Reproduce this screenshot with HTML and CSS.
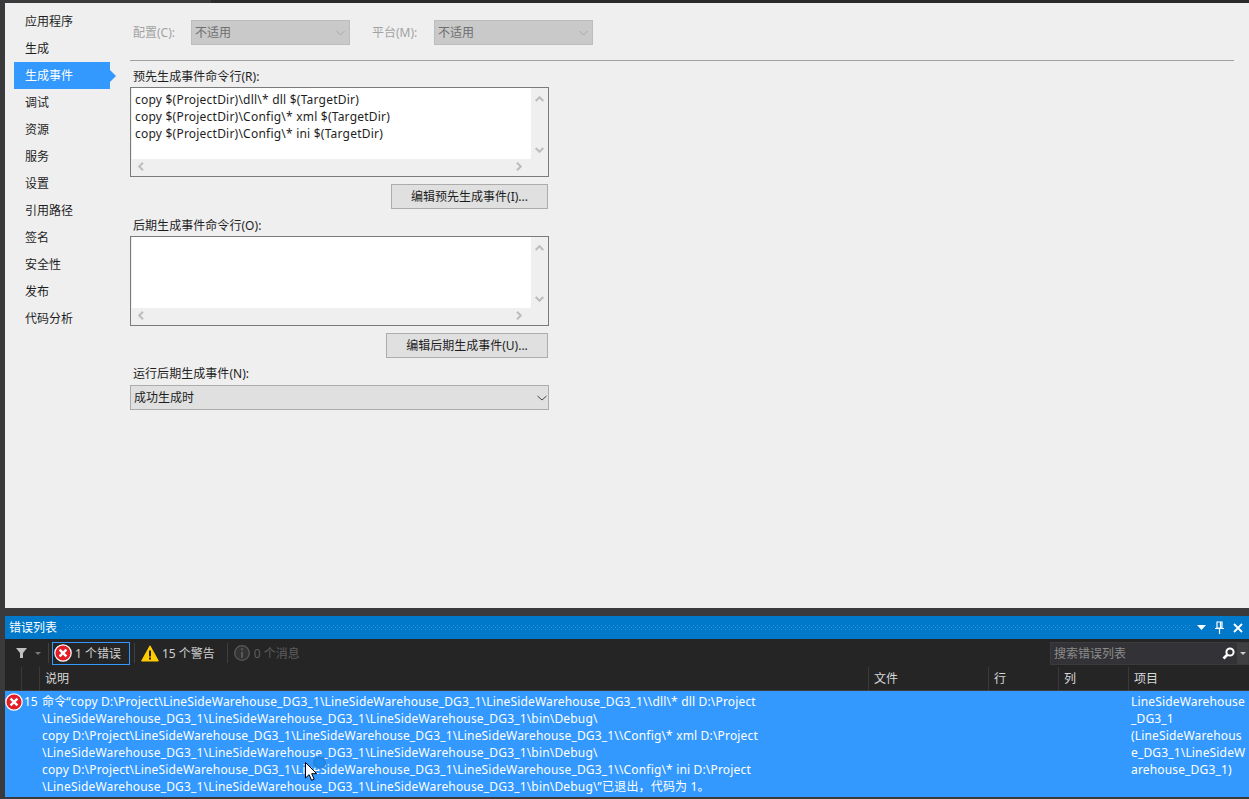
FILE: index.html
```html
<!DOCTYPE html>
<html lang="zh-CN">
<head>
<meta charset="utf-8">
<title>项目属性</title>
<link rel="stylesheet" href="styles.css">
</head>
<body>
<div class="topbar"><div class="topbar-dark"></div></div>
<main class="props">
  <nav class="side">
    <div class="nav">应用程序</div>
    <div class="nav">生成</div>
    <div class="nav active">生成事件</div>
    <div class="nav">调试</div>
    <div class="nav">资源</div>
    <div class="nav">服务</div>
    <div class="nav">设置</div>
    <div class="nav">引用路径</div>
    <div class="nav">签名</div>
    <div class="nav">安全性</div>
    <div class="nav">发布</div>
    <div class="nav">代码分析</div>
  </nav>
  <section class="form">
    <div class="config">
      <span class="dim lbl-c">配置(C):</span>
      <div class="select disabled s1">不适用<svg class="chev" width="9" height="6" viewBox="0 0 9 6"><path d="M.5 1l4 4 4-4" fill="none" stroke="#a8a8a8"/></svg></div>
      <span class="dim lbl-m">平台(M):</span>
      <div class="select disabled s1">不适用<svg class="chev" width="9" height="6" viewBox="0 0 9 6"><path d="M.5 1l4 4 4-4" fill="none" stroke="#a8a8a8"/></svg></div>
    </div>
    <div class="rule"></div>
    <label class="cap first">预先生成事件命令行(R):</label>
    <div class="area">
      <div class="area-text">copy $(ProjectDir)\dll\* dll $(TargetDir)<br>copy $(ProjectDir)\Config\* xml $(TargetDir)<br>copy $(ProjectDir)\Config\* ini $(TargetDir)</div>
      <div class="vbar"><svg width="9" height="6" viewBox="0 0 9 6"><path d="M.7 5L4.5 1.2 8.3 5" fill="none" stroke="#bdbdbd" stroke-width="2"/></svg><svg width="9" height="6" viewBox="0 0 9 6"><path d="M.7 1l3.8 3.8L8.3 1" fill="none" stroke="#bdbdbd" stroke-width="2"/></svg></div>
      <div class="hbar"><svg width="6" height="9" viewBox="0 0 6 9"><path d="M5 .7L1.2 4.5 5 8.3" fill="none" stroke="#bdbdbd" stroke-width="2"/></svg><svg width="6" height="9" viewBox="0 0 6 9"><path d="M1 .7l3.8 3.8L1 8.3" fill="none" stroke="#bdbdbd" stroke-width="2"/></svg></div>
    </div>
    <div class="btn-row"><div class="btn b1">编辑预先生成事件(I)...</div></div>
    <label class="cap second">后期生成事件命令行(O):</label>
    <div class="area">
      <div class="area-text"></div>
      <div class="vbar"><svg width="9" height="6" viewBox="0 0 9 6"><path d="M.7 5L4.5 1.2 8.3 5" fill="none" stroke="#bdbdbd" stroke-width="2"/></svg><svg width="9" height="6" viewBox="0 0 9 6"><path d="M.7 1l3.8 3.8L8.3 1" fill="none" stroke="#bdbdbd" stroke-width="2"/></svg></div>
      <div class="hbar"><svg width="6" height="9" viewBox="0 0 6 9"><path d="M5 .7L1.2 4.5 5 8.3" fill="none" stroke="#bdbdbd" stroke-width="2"/></svg><svg width="6" height="9" viewBox="0 0 6 9"><path d="M1 .7l3.8 3.8L1 8.3" fill="none" stroke="#bdbdbd" stroke-width="2"/></svg></div>
    </div>
    <div class="btn-row"><div class="btn b2">编辑后期生成事件(U)...</div></div>
    <label class="cap third">运行后期生成事件(N):</label>
    <div class="select run">成功生成时<svg class="chev" width="10" height="6" viewBox="0 0 10 6"><path d="M.5 1l4.5 4 4.5-4" fill="none" stroke="#444"/></svg></div>
  </section>
</main>
<section class="panel">
  <header class="title">
    <span class="title-text">错误列表</span>
    <span class="dots"></span>
    <svg class="t-ico drop" width="9" height="5" viewBox="0 0 9 5"><path d="M0 0h9L4.5 5z" fill="#fff"/></svg>
    <svg class="t-ico pin" width="9" height="13" viewBox="0 0 9 13"><path d="M2 1h5v6H2zM5.5 1v6M0 7.5h9M4.5 8v5" fill="none" stroke="#fff" stroke-width="1.2"/></svg>
    <svg class="t-ico x" width="10" height="10" viewBox="0 0 10 10"><path d="M1 1l8 8M9 1l-8 8" stroke="#fff" stroke-width="1.8"/></svg>
  </header>
  <div class="tools">
    <svg class="filter" width="11" height="10" viewBox="0 0 11 10"><path d="M0 0h11L7 5v5H4V5z" fill="#c0c0c0"/></svg>
    <svg class="caret" width="6" height="3" viewBox="0 0 6 3"><path d="M0 0h6L3 3z" fill="#777"/></svg>
    <span class="sep s1"></span>
    <div class="tbtn on">
      <svg width="18" height="18" viewBox="0 0 18 18"><circle cx="9" cy="9" r="8.2" fill="#e41e26" stroke="#fff" stroke-width="1.2"/><path d="M5.6 5.6l6.8 6.8M12.4 5.6l-6.8 6.8" stroke="#fff" stroke-width="2.4"/></svg>
      <span>1 个错误</span>
    </div>
    <span class="sep s2"></span>
    <div class="tbtn warn">
      <svg width="18" height="17" viewBox="0 0 18 17"><path d="M9 .8L17.4 16H.6z" fill="#ffcc00" stroke="#ffcc00" stroke-linejoin="round"/><path d="M9 5.5v6M9 12.5v2" stroke="#222" stroke-width="2"/></svg>
      <span>15 个警告</span>
    </div>
    <span class="sep s3"></span>
    <div class="tbtn off">
      <svg width="16" height="16" viewBox="0 0 16 16"><circle cx="8" cy="8" r="7.3" fill="#333" stroke="#5a5a5a" stroke-width="1.3"/><path d="M8 3.3v2M8 6.8v6" stroke="#5a5a5a" stroke-width="2"/></svg>
      <span>0 个消息</span>
    </div>
    <div class="search">
      <span class="search-text">搜索错误列表</span>
      <svg class="mag" width="13" height="13" viewBox="0 0 13 13"><circle cx="8" cy="5" r="3.6" fill="none" stroke="#fff" stroke-width="2"/><path d="M5.5 7.5L1.5 11.5" stroke="#fff" stroke-width="2.6"/></svg>
      <span class="search-btn"><svg width="6" height="3" viewBox="0 0 6 3"><path d="M0 0h6L3 3z" fill="#ccc"/></svg></span>
    </div>
  </div>
  <div class="grid head">
    <div class="cell"></div><div class="cell"></div>
    <div class="cell">说明</div><div class="cell">文件</div><div class="cell">行</div><div class="cell">列</div><div class="cell">项目</div>
  </div>
  <div class="grid row">
    <div class="r-icon"><svg width="18" height="18" viewBox="0 0 18 18"><circle cx="9" cy="9" r="8.2" fill="#e41e26" stroke="#fff" stroke-width="1.2"/><path d="M5.6 5.6l6.8 6.8M12.4 5.6l-6.8 6.8" stroke="#fff" stroke-width="2.4"/></svg></div>
    <div class="r-num">15</div>
    <div class="r-desc">命令“copy D:\Project\LineSideWarehouse_DG3_1\LineSideWarehouse_DG3_1\LineSideWarehouse_DG3_1\\dll\* dll D:\Project<br>\LineSideWarehouse_DG3_1\LineSideWarehouse_DG3_1\LineSideWarehouse_DG3_1\bin\Debug\<br>copy D:\Project\LineSideWarehouse_DG3_1\LineSideWarehouse_DG3_1\LineSideWarehouse_DG3_1\\Config\* xml D:\Project<br>\LineSideWarehouse_DG3_1\LineSideWarehouse_DG3_1\LineSideWarehouse_DG3_1\bin\Debug\<br>copy D:\Project\LineSideWarehouse_DG3_1\LineSideWarehouse_DG3_1\LineSideWarehouse_DG3_1\\Config\* ini D:\Project<br>\LineSideWarehouse_DG3_1\LineSideWarehouse_DG3_1\LineSideWarehouse_DG3_1\bin\Debug\”已退出，代码为 1。</div>
    <div></div><div></div><div></div>
    <div class="r-proj">LineSideWarehouse<br>_DG3_1<br>(LineSideWarehous<br>e_DG3_1\LineSideW<br>arehouse_DG3_1)</div>
  </div>
</section>
<div class="ring"></div>
<svg class="cursor" width="13" height="19" viewBox="0 0 13 19"><path d="M.5.5v15.5l3.6-3.3 2.5 5.6 2.6-1.1-2.5-5.5h5z" fill="#fff" stroke="#000" stroke-width="1"/></svg>
</body>
</html>
```
FILE: styles.css
```css
* { box-sizing: border-box; }
html, body { margin: 0; height: 100%; }
body {
  width: 1249px; height: 799px; overflow: hidden; position: relative;
  background: #3a3a3d;
  font: 12px/17px "Noto Sans", "Noto Sans CJK SC", sans-serif;
  color: #1e1e1e;
  display: flex; flex-direction: column;
}
.topbar { height: 3px; background: #3a3a3d; display: flex; justify-content: flex-end; flex: none; }
.topbar-dark { width: 1038px; background: #2a2a2c; }
.props {
  height: 605px; margin-left: 5px; flex: none;
  background: #efefef; display: flex;
}
.side { width: 125px; padding: 5px 0 0 9px; flex: none; }
.nav { width: 96px; height: 27px; line-height: 27px; padding-left: 11px; color: #1e1e1e; position: relative; }
.nav.active { background: #3399ff; color: #fff; }
.nav.active::after {
  content: ""; position: absolute; left: 96px; top: 8px;
  border-left: 6px solid #3399ff; border-top: 6px solid transparent; border-bottom: 6px solid transparent;
}
.form { width: 1104px; flex: none; display: flex; flex-direction: column; }
.config { display: flex; align-items: center; height: 25px; margin-top: 17px; }
.dim { color: #a2a2a2; }
.lbl-c { margin-left: 3px; width: 58px; }
.lbl-m { margin-left: 22px; width: 62px; }
.select {
  height: 25px; line-height: 23px; border: 1px solid #acacac; background: #e0e0e0;
  padding-left: 3px; position: relative; color: #1e1e1e;
}
.select .chev { position: absolute; right: 4px; top: 9px; }
.select.disabled { background: #c9c9c9; border-color: #bdbdbd; color: #6e6e6e; }
.s1 { width: 159px; }
.rule { height: 1px; background: #a0a0a0; margin-top: 15px; }
.cap { display: block; height: 17px; line-height: 17px; padding-left: 3px; color: #1e1e1e; letter-spacing: 0.05px; }
.cap.first { margin-top: 7px; }
.cap.second { margin-top: 8px; }
.cap.third { margin-top: 7px; }
.area {
  width: 419px; height: 90px; margin-top: 2px; border: 1px solid #7a7a7a; background: #efefef;
  display: grid; grid-template-columns: 400px 1fr; grid-template-rows: 71px 1fr; flex: none;
}
.area-text { background: #fff; padding: 3px 0 0 3px; border-radius: 0 0 2px 0; white-space: nowrap; margin: 0 0 0 1px; overflow: hidden; letter-spacing: 0.22px; }
.vbar { grid-row: 1 / 3; grid-column: 2; display: flex; flex-direction: column; align-items: center; gap: 45px; padding-top: 8px; }
.hbar { grid-row: 2; grid-column: 1; display: flex; justify-content: space-between; align-items: center; padding: 0 9px 2px 7px; }
.btn-row { display: flex; justify-content: flex-end; width: 418px; margin-top: 7px; }
.btn {
  height: 25px; line-height: 23px; background: #e0e0e0; border: 1px solid #acacac; text-align: center; color: #1e1e1e;
}
.b1 { width: 157px; }
.b2 { width: 162px; }
.run { width: 419px; margin-top: 3px; }
.run .chev { right: 1px; top: 9px; }

.panel { flex: 1; margin: 8px 0 2px 5px; background: #252526; display: flex; flex-direction: column; min-height: 0; }
.title { height: 23px; background: #0079cb; color: #fff; display: flex; align-items: center; padding-left: 4px; flex: none; }
.title-text { width: 56px; flex: none; }
.dots {
  width: 1125px; height: 6px; flex: none;
  background-image:
    radial-gradient(circle at 0.5px 0.5px, #2f95da 0.7px, transparent 0.8px),
    radial-gradient(circle at 2.5px 2.5px, #2f95da 0.7px, transparent 0.8px);
  background-size: 4px 4px;
}
.t-ico { flex: none; }
.drop { margin-left: 7px; }
.pin { margin-left: 9px; }
.x { margin-left: 9px; }
.tools { height: 28px; display: flex; align-items: center; flex: none; color: #d0d0d0; padding-left: 11px; background: #252526; }
.filter { flex: none; }
.caret { margin-left: 8px; flex: none; }
.sep { width: 1px; height: 20px; background: #3f3f41; flex: none; }
.s1 { }
.tools .s1 { width: 1px; margin: 0 3px 0 7px; }
.s2 { margin: 0 6px 0 4px; }
.s3 { margin: 0 6px 0 12px; }
.tbtn { display: flex; align-items: center; gap: 3px; height: 23px; flex: none; white-space: nowrap; }
.tbtn.on { border: 1px solid #3399ff; width: 78px; padding-left: 1px; }
.tbtn.off { color: #5e5e5e; gap: 4px; }
.search {
  margin-left: auto; width: 199px; height: 23px; background: #333337; display: flex; align-items: center;
  color: #8c8c8c; padding-left: 3px; border: 1px solid #3b3b3d; flex: none;
}
.mag { margin-left: auto; margin-right: 2px; flex: none; }
.search-btn { display: flex; align-items: center; justify-content: center; width: 11px; height: 21px; background: #3f3f42; flex: none; }
.grid { display: grid; grid-template-columns: 17px 18px 829px 120px 70px 70px 120px; flex: none; }
.head { height: 24px; background: #252526; color: #d8d8d8; border-bottom: 1px solid #3f3f41; }
.cell { border-right: 1px solid #3a3a3c; line-height: 23px; padding-left: 5px; }
.cell:last-child { border-right: 0; }
.row { height: 106px; background: #3399ff; color: #fff; padding-top: 2px; line-height: 17px; }
.r-icon svg { display: block; }
.r-num { margin-left: 2px; }
.r-desc { margin-left: 2px; white-space: nowrap; letter-spacing: 0.17px; }
.r-proj { grid-column: 7; padding-left: 2px; white-space: nowrap; letter-spacing: 0.16px; }
.ring { position: absolute; left: 313px; top: 756px; width: 13px; height: 13px; border-radius: 50%; border: 2px solid #2a82d6; background: #1e8cf0; }
.cursor { position: absolute; left: 305px; top: 762px; }
```
